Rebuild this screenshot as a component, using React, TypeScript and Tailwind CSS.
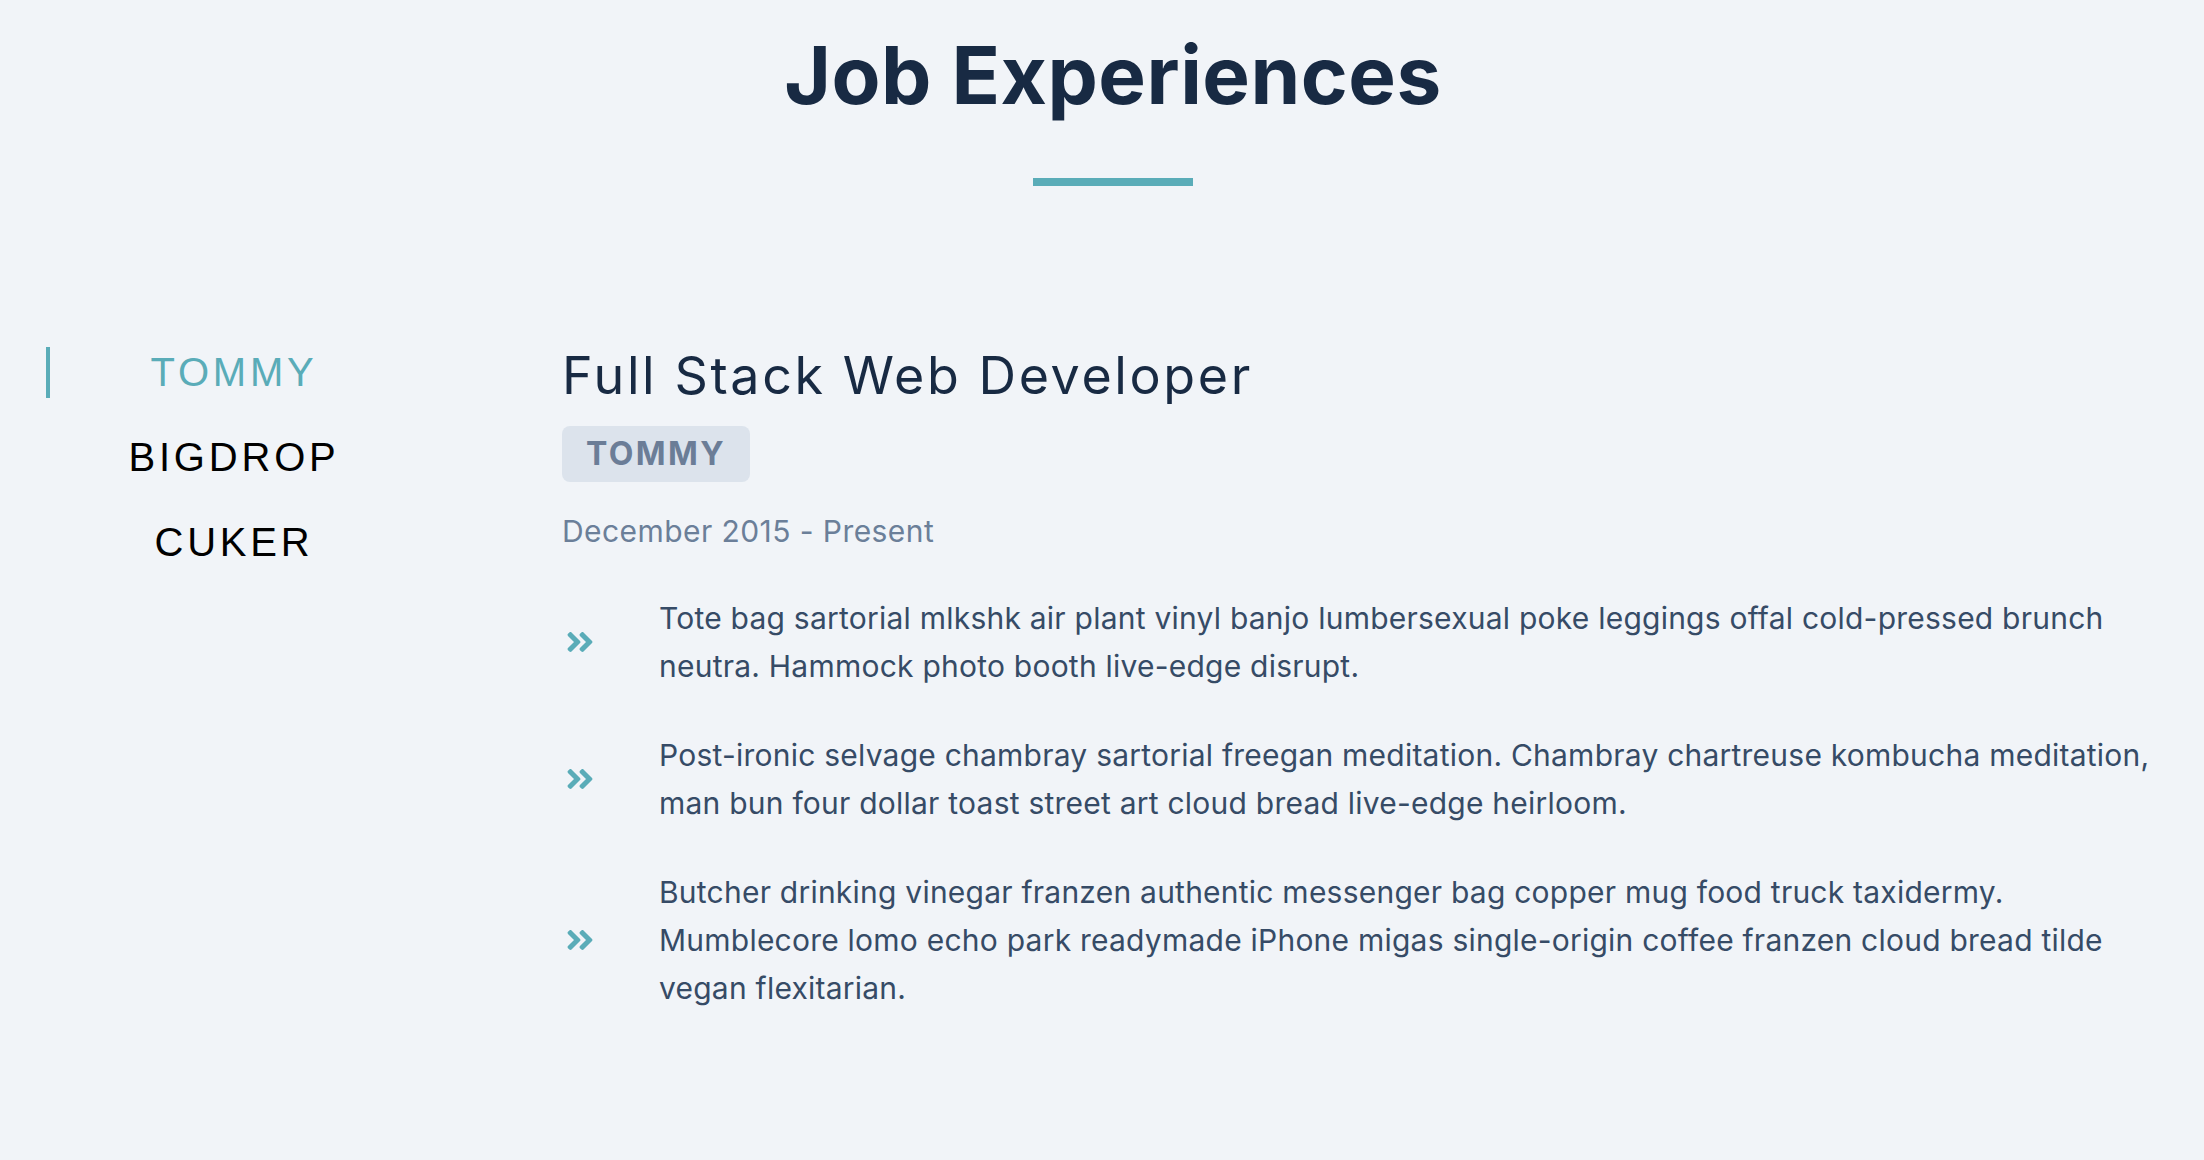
import React, { useState } from "react";
import { FaAngleDoubleRight } from "react-icons/fa";

interface Job {
  company: string;
  title: string;
  dates: string;
  duties: string[];
}

const jobs: Job[] = [
  {
    company: "TOMMY",
    title: "Full Stack Web Developer",
    dates: "December 2015 - Present",
    duties: [
      "Tote bag sartorial mlkshk air plant vinyl banjo lumbersexual poke leggings offal cold-pressed brunch neutra. Hammock photo booth live-edge disrupt.",
      "Post-ironic selvage chambray sartorial freegan meditation. Chambray chartreuse kombucha meditation, man bun four dollar toast street art cloud bread live-edge heirloom.",
      "Butcher drinking vinegar franzen authentic messenger bag copper mug food truck taxidermy. Mumblecore lomo echo park readymade iPhone migas single-origin coffee franzen cloud bread tilde vegan flexitarian.",
    ],
  },
  {
    company: "BIGDROP",
    title: "Front-End Engineer",
    dates: "May 2015 - December 2015",
    duties: [],
  },
  {
    company: "CUKER",
    title: "Engineering Intern",
    dates: "May 2014 - September 2015",
    duties: [],
  },
];

const App = () => {
  const [value, setValue] = useState(0);
  const job = jobs[value];

  return (
    <section className="min-h-screen w-full bg-[#f1f4f8] font-['Inter',sans-serif]">
      {/* heading */}
      <div className="pl-[22px] text-center">
        <h1 className="pt-[35px] text-[80px] font-bold leading-none tracking-[0.5px] text-[#182a43]">
          Job Experiences
        </h1>
        <div className="mx-auto mt-[63px] h-[8px] w-[160px] bg-[#5aacb8]" />
      </div>

      <div className="mt-[161px] flex pl-[46px] pr-[34px]">
        {/* companies */}
        <div className="flex w-[372px] shrink-0 flex-col gap-[34px]">
          {jobs.map((item, index) => (
            <button
              key={item.company}
              onClick={() => setValue(index)}
              className={`h-[51px] border-l-4 bg-transparent text-center font-['Liberation_Sans',Arial,sans-serif] text-[40px] leading-[51px] tracking-[3.8px] ${
                index === value
                  ? "border-[#5aacb8] text-[#5aacb8]"
                  : "border-transparent text-black"
              }`}
            >
              {item.company}
            </button>
          ))}
        </div>

        {/* job info */}
        <article className="ml-[144px] flex-1">
          <h3 className="text-[52px] leading-[58px] tracking-[2.6px] text-[#182a43]">
            {job.title}
          </h3>
          <h4 className="mt-[21px] inline-block rounded-lg bg-[#dce3ec] px-6 py-2 text-[32px] font-bold leading-[40px] tracking-[2.4px] text-[#6b7d97]">
            {job.company}
          </h4>
          <p className="mt-[31px] text-[30px] leading-[36px] tracking-[0.43px] text-[#6b7f99]">
            {job.dates}
          </p>
          <div className="mt-[45px] flex flex-col gap-[41px]">
            {job.duties.map((duty, index) => (
              <div key={index} className="flex items-center">
                <div className="w-[97px] shrink-0 pl-[2px]">
                  <FaAngleDoubleRight size={32} className="text-[#5aacb8]" />
                </div>
                <p className="text-[30px] leading-[48px] tracking-[0.23px] text-[#364b66]">
                  {duty}
                </p>
              </div>
            ))}
          </div>
        </article>
      </div>
    </section>
  );
};

export default App;
